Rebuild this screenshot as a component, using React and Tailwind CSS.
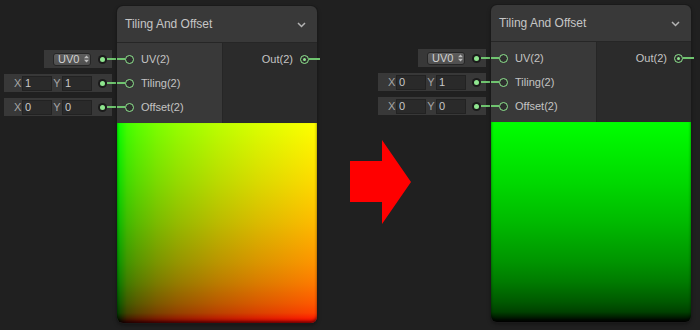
import React from 'react';

const wire = 'h-[2px] bg-[#6fc46f]';

function OuterDot() {
  return (
    <div className="w-[9px] h-[9px] rounded-full bg-[#1b1b1b] flex items-center justify-center shrink-0">
      <div className="w-[5px] h-[5px] rounded-full bg-[#8fe68f]" />
    </div>
  );
}

function SortArrows() {
  return (
    <svg width="5" height="8" viewBox="0 0 5 8" className="shrink-0">
      <polygon points="0,3.2 2.5,0.5 5,3.2" fill="#bdbdbd" />
      <polygon points="0,4.8 2.5,7.5 5,4.8" fill="#bdbdbd" />
    </svg>
  );
}

function InputRow({ children, pl }) {
  return (
    <div className="flex items-center h-[18px]">
      <div className={`h-full bg-[#383838] flex items-center ${pl}`}>
        {children}
        <OuterDot />
        <div className={`w-[5px] ${wire}`} />
      </div>
      <div className={`w-[5px] ${wire}`} />
    </div>
  );
}

function VecField({ x, y }) {
  return (
    <>
      <span className="w-[8px] text-[11px] leading-none text-[#a6a6a6]">X</span>
      <div className="w-[30px] h-[15px] bg-[#2a2a2a] border border-[#222] flex items-center pl-[2px] text-[11px] text-[#c8c8c8] leading-none">{x}</div>
      <span className="w-[10px] text-center text-[11px] leading-none text-[#a6a6a6]">Y</span>
      <div className="w-[30px] h-[15px] bg-[#2a2a2a] border border-[#222] flex items-center pl-[2px] text-[11px] text-[#c8c8c8] leading-none">{y}</div>
      <div className="w-[6px]" />
    </>
  );
}

function Inputs({ tiling }) {
  return (
    <div className="flex flex-col items-end gap-[6px]">
      <InputRow pl="pl-[9px]">
        <div className="w-[38px] h-[13px] rounded-[3px] border border-[#262626] bg-[linear-gradient(#5d5d5d,#4f4f4f)] flex items-center pl-[4px] gap-[5px] text-[11px] leading-none text-[#d2d2d2]">
          <span>UV0</span>
          <SortArrows />
        </div>
        <div className="w-[7px]" />
      </InputRow>
      <InputRow pl="pl-[10px]">
        <VecField x={tiling[0]} y={tiling[1]} />
      </InputRow>
      <InputRow pl="pl-[10px]">
        <VecField x="0" y="0" />
      </InputRow>
    </div>
  );
}

function PortIn({ label }) {
  return (
    <div className="h-[24px] flex items-center">
      <div className={`w-[8px] ${wire}`} />
      <div className="w-[9px] h-[9px] rounded-full border-[1.5px] border-[#8fe68f] bg-[#2e2e2e]" />
      <span className="ml-[7px] text-[11px] text-[#c4c4c4]">{label}</span>
    </div>
  );
}

function Node({ preview, top }) {
  return (
    <div className={`w-[200px] h-[317px] ${top} rounded-[6px] bg-[#393939] shadow-[0_0_0_1px_#1a1a1a,0_2px_4px_rgba(0,0,0,0.4)] flex flex-col shrink-0`}>
      <div className="h-[37px] border-b border-[#262626] flex items-center justify-between px-[8px] rounded-t-[6px]">
        <span className="text-[12px] text-[#c6c6c6]">Tiling And Offset</span>
        <svg width="9" height="6" viewBox="0 0 9 6" className="mr-[3px] mt-[1px]">
          <polyline points="1,1 4.5,4.5 8,1" fill="none" stroke="#b4b4b4" strokeWidth="1.5" />
        </svg>
      </div>
      <div className="h-[80px] flex">
        <div className="w-[106px] bg-[#393939] border-r border-[#262626] pt-[4px]">
          <PortIn label="UV(2)" />
          <PortIn label="Tiling(2)" />
          <PortIn label="Offset(2)" />
        </div>
        <div className="flex-1 bg-[#2b2b2b] pt-[4px]">
          <div className="h-[24px] flex items-center justify-end">
            <span className="text-[11px] text-[#c4c4c4]">Out(2)</span>
            <div className="ml-[7px] w-[9px] h-[9px] rounded-full border-[1.5px] border-[#8fe68f] bg-[#2e2e2e] flex items-center justify-center">
              <div className="w-[3px] h-[3px] rounded-full bg-[#8fe68f]" />
            </div>
            <div className={`w-[11px] -mr-[3px] ${wire}`} />
          </div>
        </div>
      </div>
      <div className={`flex-1 rounded-b-[6px] shadow-[inset_0_-2px_3px_rgba(0,0,0,0.55)] ${preview}`} />
    </div>
  );
}

export default function App() {
  return (
    <div className="w-[700px] h-[330px] bg-[#202020] flex items-start overflow-hidden font-['Liberation_Sans',Arial,sans-serif]">
      {/* left: inputs + node with tiling (1,1) */}
      <div className="w-[117px] mt-[50px] flex flex-col items-end shrink-0">
        <Inputs tiling={['1', '1']} />
      </div>
      <Node
        top="mt-[6px]"
        preview="bg-[image:linear-gradient(to_right,#000_0%,rgb(65,0,0)_5%,rgb(89,0,0)_10%,rgb(123,0,0)_20%,rgb(148,0,0)_30%,rgb(186,0,0)_50%,rgb(217,0,0)_70%,rgb(255,0,0)_100%),linear-gradient(to_top,#000_0%,rgb(0,65,0)_5%,rgb(0,89,0)_10%,rgb(0,123,0)_20%,rgb(0,148,0)_30%,rgb(0,186,0)_50%,rgb(0,217,0)_70%,rgb(0,255,0)_100%)] bg-blend-screen"
      />

      {/* middle: right node inputs + arrow */}
      <div className="w-[174px] flex flex-col shrink-0">
        <div className="mt-[49px] flex flex-col items-end">
          <Inputs tiling={['0', '1']} />
        </div>
        <svg width="61" height="84" viewBox="0 0 61 84" className="mt-[25px] ml-[33px]">
          <polygon points="0,21 32,21 32,0 61,42 32,84 32,62 0,62" fill="#ff0000" />
        </svg>
      </div>

      {/* right node with tiling (0,1) */}
      <Node
        top="mt-[5px]"
        preview="bg-[image:linear-gradient(to_top,#000_0%,rgb(0,65,0)_5%,rgb(0,89,0)_10%,rgb(0,123,0)_20%,rgb(0,148,0)_30%,rgb(0,186,0)_50%,rgb(0,217,0)_70%,rgb(0,255,0)_100%)]"
      />
    </div>
  );
}
